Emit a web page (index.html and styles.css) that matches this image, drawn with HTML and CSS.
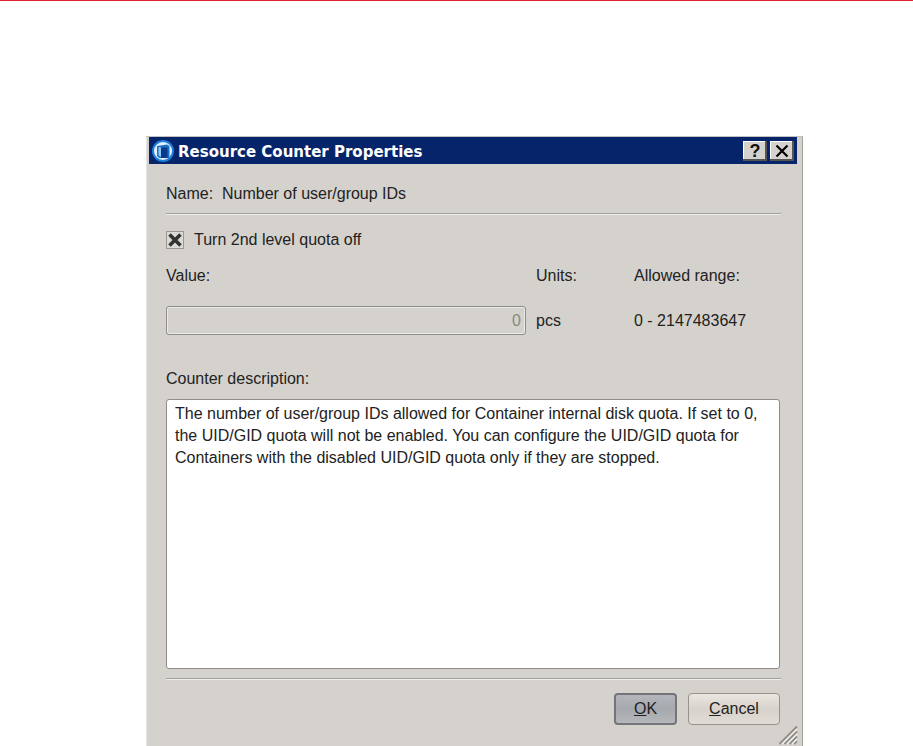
FILE: index.html
```html
<!DOCTYPE html>
<html lang="en">
<head>
  <meta charset="UTF-8" />
  <title>Resource Counter Properties</title>
  <link rel="stylesheet" href="styles.css">
</head>
<body>

<div class="topline"></div>

<div class="dialog">
  <div class="titlebar">
    <svg class="appicon" width="24" height="24" viewBox="0 0 24 24">
      <circle cx="12" cy="12" r="11" fill="#1f7fdc"/>
      <circle cx="12" cy="12" r="9" fill="#e3f3fd"/>
      <path d="M6 7 L16 5.5 L18.5 7 L18.5 19 L8 19 L6 17 Z" fill="#1c6fc6"/>
      <path d="M10 8.5 L16.5 8.5 L16.5 19 L10 19 Z" fill="#0b3a8c"/>
      <path d="M7.5 8 L10 8.5 L10 18 L7.5 16.5 Z" fill="#8cc6f2"/>
    </svg>
    <span class="title">Resource Counter Properties</span>
    <div class="capbtn">
      <svg width="24" height="20" viewBox="0 0 24 20"><text x="12" y="16" text-anchor="middle" class="capglyph">?</text></svg>
    </div>
    <div class="capbtn">
      <svg width="24" height="20" viewBox="0 0 24 20"><path d="M6.5 4.5 L17.5 15.5 M17.5 4.5 L6.5 15.5" stroke="#000" stroke-width="2.2" fill="none"/></svg>
    </div>
  </div>

  <div class="content">
    <div class="namerow">Name:&nbsp; Number of user/group IDs</div>
    <div class="sep"></div>

    <label class="checkrow">
      <span class="checkbox">
        <svg width="16" height="16" viewBox="0 0 16 16"><path d="M2.5 2.5 L13.5 13.5 M13.5 2.5 L2.5 13.5" stroke="#333" stroke-width="3.6" fill="none"/></svg>
      </span>
      Turn 2nd level quota off
    </label>

    <div class="valuegrid">
      <div>Value:</div>
      <div>Units:</div>
      <div>Allowed range:</div>
      <div class="valuebox">0</div>
      <div>pcs</div>
      <div>0 - 2147483647</div>
    </div>

    <div class="desclabel">Counter description:</div>
    <div class="descbox">The number of user/group IDs allowed for Container internal disk quota. If set to 0, the UID/GID quota will not be enabled. You can configure the UID/GID quota for Containers with the disabled UID/GID quota only if they are stopped.</div>
    <div class="sep sep-bottom"></div>

    <div class="buttons">
      <button class="button button-ok"><u>O</u>K</button>
      <button class="button button-cancel"><u>C</u>ancel</button>
    </div>
  </div>

  <svg class="grip" width="20" height="20" viewBox="0 0 20 20">
    <path d="M19 1.5 L1.5 19 M19 6.5 L6.5 19 M19 11.5 L11.5 19 M19 16 L16 19" stroke="#8f8c86" stroke-width="1.8" fill="none"/>
    <path d="M19 4 L4 19 M19 9 L9 19 M19 14 L14 19" stroke="#f4f3f0" stroke-width="1.2" fill="none"/>
  </svg>
</div>

</body>
</html>
```

FILE: styles.css
```css
html, body {
  height: 100%;
}
body {
  margin: 0;
  background: #fff;
  font-family: 'Liberation Sans', Arial, sans-serif;
  font-size: 16px;
  color: #222;
  overflow: hidden;
}
.topline {
  height: 1px;
  background: #e2202f;
}
.dialog {
  position: relative;
  box-sizing: border-box;
  width: 657px;
  height: 610px;
  margin: 135px 0 0 146px;
  padding: 0 5px 0 2px;
  background: #d5d2cd;
  border-left: 1px solid #e6e4e0;
  border-top: 1px solid #c4c2be;
  border-right: 1px solid #a3a19d;
}
.titlebar {
  display: flex;
  align-items: center;
  height: 27px;
  padding: 0 3px 0 2px;
  background: #06246a;
}
.appicon {
  flex: none;
  margin-right: 3px;
}
.title {
  flex: 1;
  padding-top: 2px;
  color: #fff;
  font-family: 'DejaVu Sans', sans-serif;
  font-weight: bold;
  font-size: 15px;
}
.capbtn {
  width: 24px;
  height: 20px;
  margin-left: 3px;
  background: #d5d2cd;
  box-shadow: inset -2px -2px 0 #555, inset 1px 1px 0 #fff;
}
.capglyph {
  font-family: 'Liberation Sans', sans-serif;
  font-weight: bold;
  font-size: 18px;
  fill: #111;
}
.content {
  padding: 0 16px 0 17px;
}
.namerow {
  margin-top: 21px;
  line-height: 18px;
}
.sep {
  height: 1px;
  margin-top: 10px;
  background: #a3a19d;
  border-bottom: 1px solid #f0eeea;
}
.checkrow {
  display: flex;
  align-items: center;
  gap: 10px;
  margin-top: 15px;
  line-height: 20px;
}
.checkbox {
  display: block;
  box-sizing: border-box;
  width: 18px;
  height: 18px;
  background: #dcdad6;
  border: 1px solid #9a9894;
}
.valuegrid {
  display: grid;
  grid-template-columns: 370px 98px auto;
  grid-template-rows: 18px 29px;
  row-gap: 21px;
  align-items: center;
  margin-top: 17px;
}
.valuebox {
  box-sizing: border-box;
  width: 360px;
  height: 29px;
  line-height: 27px;
  padding-right: 4px;
  text-align: right;
  color: #8a8884;
  background: #d5d2cd;
  border: 1px solid #8f8d89;
  border-radius: 3px;
  box-shadow: inset 0 0 0 1px #ecebe7;
}
.desclabel {
  margin-top: 35px;
  line-height: 18px;
}
.descbox {
  box-sizing: border-box;
  height: 270px;
  margin: 11px 1px 0 0;
  padding: 3px 8px;
  line-height: 22px;
  background: #fff;
  border: 1px solid #8f8d89;
  border-radius: 3px;
}
.sep-bottom {
  margin-top: 9px;
}
.buttons {
  display: flex;
  justify-content: flex-end;
  gap: 11px;
  margin: 13px 1px 0 0;
}
.button {
  box-sizing: border-box;
  height: 32px;
  padding: 0;
  font: inherit;
  color: #222;
  background: linear-gradient(#ece6e0, #d8d2cc 50%, #e2dcd6);
  border: 1px solid #96928e;
  border-radius: 4px;
}
.button-ok {
  width: 63px;
  background: linear-gradient(#b3b6ba, #a5a8ac 50%, #b5b8bb);
  border: 2px solid #74757a;
}
.button-cancel {
  width: 92px;
}
.grip {
  position: absolute;
  right: 4px;
  bottom: 1px;
}
```
